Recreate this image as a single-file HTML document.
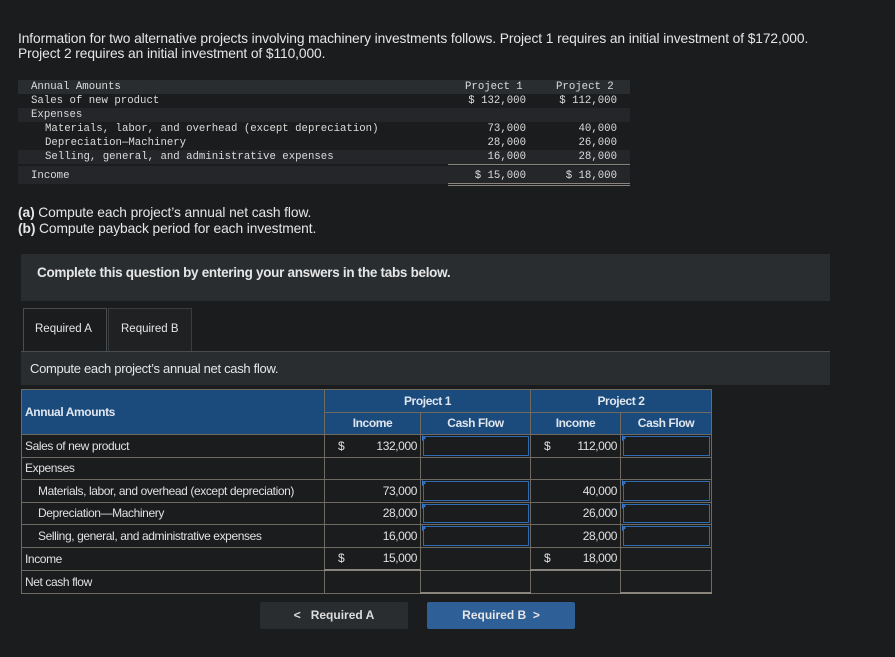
<!DOCTYPE html><html><head><style>
body{margin:0;background:#1b1c1e;width:895px;height:657px;position:relative;overflow:hidden;font-family:"Liberation Sans",sans-serif;color:#e6e6e6}
.a{position:absolute;white-space:nowrap}
.m{font-family:"Liberation Mono",monospace;font-size:10.7px;color:#dcdcdc}
.t{font-size:13.8px;letter-spacing:-0.1px}
table{position:absolute;left:21px;top:389px;border-collapse:collapse;table-layout:fixed;width:690px;font-size:12px;letter-spacing:-0.4px}
td{border:1px solid #6e6a62;padding:0 3px;height:21.5px;color:#e0e0e0;overflow:hidden;white-space:nowrap;line-height:14px}
th{background:#1b4a7d;border:1px solid #6e6a62;font-weight:bold;color:#dfe6ee;height:21.5px;padding:0;line-height:14px;font-size:12px}
.r{text-align:right}
.in{position:relative}
.in div{position:absolute;left:2px;top:1px;right:1px;bottom:1px;border:1px solid #2d6bb3}
.in:before{content:"";position:absolute;left:1px;top:0;border-left:4px solid #3a7ad0;border-top:3px solid transparent;border-bottom:3px solid transparent}
</style></head><body>
<div class="a t" style="left:18px;top:31px">Information for two alternative projects involving machinery investments follows. Project 1 requires an initial investment of $172,000.</div>
<div class="a t" style="left:18px;top:46px">Project 2 requires an initial investment of $110,000.</div>
<div class="a" style="left:18px;top:80px;width:612px;height:14px;background:#2a2d30"></div>
<div class="a" style="left:18px;top:108px;width:612px;height:14px;background:#242629"></div>
<div class="a" style="left:18px;top:150px;width:612px;height:14px;background:#242629"></div>
<div class="a" style="left:18px;top:166px;width:612px;height:18px;background:#242629"></div>
<div class="a m" style="left:31px;top:81px">Annual Amounts</div>
<div class="a m" style="left:31px;top:95px">Sales of new product</div>
<div class="a m" style="left:31px;top:109px">Expenses</div>
<div class="a m" style="left:45px;top:123px">Materials, labor, and overhead (except depreciation)</div>
<div class="a m" style="left:45px;top:137px">Depreciation—Machinery</div>
<div class="a m" style="left:45px;top:151px">Selling, general, and administrative expenses</div>
<div class="a m" style="left:31px;top:170px">Income</div>
<div class="a m" style="left:465px;top:81px">Project 1</div>
<div class="a m" style="left:556px;top:81px">Project 2</div>
<div class="a m" style="right:369px;top:95px">$ 132,000</div>
<div class="a m" style="right:278px;top:95px">$ 112,000</div>
<div class="a m" style="right:369px;top:123px">73,000</div><div class="a m" style="right:278px;top:123px">40,000</div>
<div class="a m" style="right:369px;top:137px">28,000</div><div class="a m" style="right:278px;top:137px">26,000</div>
<div class="a m" style="right:369px;top:151px">16,000</div><div class="a m" style="right:278px;top:151px">28,000</div>
<div class="a" style="left:448px;top:164px;width:182px;height:1px;background:#8a857c"></div>
<div class="a m" style="right:369px;top:170px">$ 15,000</div><div class="a m" style="right:278px;top:170px">$ 18,000</div>
<div class="a" style="left:448px;top:183px;width:182px;height:3px;border-top:1px solid #8a857c;border-bottom:1px solid #8a857c;box-sizing:border-box"></div>
<div class="a t" style="left:18px;top:205px"><b>(a)</b> Compute each project’s annual net cash flow.</div>
<div class="a t" style="left:18px;top:221px"><b>(b)</b> Compute payback period for each investment.</div>
<div class="a" style="left:21px;top:254px;width:809px;height:47px;background:#2a2d30"></div>
<div class="a" style="left:37px;top:265px;font-size:13.5px;font-weight:bold;letter-spacing:-0.3px">Complete this question by entering your answers in the tabs below.</div>
<div class="a" style="left:23px;top:308px;width:82px;height:44px;border:1px solid #4a4d50;border-bottom:none;background:#1b1c1e"></div>
<div class="a" style="left:108px;top:308px;width:82px;height:43px;border:1px solid #3a3d40;background:#1f2123"></div>
<div class="a" style="left:35px;top:323px;font-size:11.5px">Required A</div>
<div class="a" style="left:121px;top:323px;font-size:11.5px">Required B</div>
<div class="a" style="left:21px;top:351px;width:809px;height:33px;background:#2a2d30;border-top:1px solid #4a4d50"></div>
<div class="a" style="left:30px;top:361px;font-size:13px;letter-spacing:-0.3px">Compute each project’s annual net cash flow.</div>
<table>
<colgroup><col style="width:303px"><col style="width:96px"><col style="width:110px"><col style="width:90px"><col style="width:91px"></colgroup>
<tr><th rowspan="2" style="text-align:left;padding-left:3px">Annual Amounts</th><th colspan="2">Project 1</th><th colspan="2">Project 2</th></tr>
<tr><th>Income</th><th>Cash Flow</th><th>Income</th><th>Cash Flow</th></tr>
<tr><td>Sales of new product</td><td class="r"><span style="float:left;margin-left:10px">$</span>132,000</td><td class="in"><div></div></td><td class="r"><span style="float:left;margin-left:10px">$</span>112,000</td><td class="in"><div></div></td></tr>
<tr><td>Expenses</td><td></td><td></td><td></td><td></td></tr>
<tr><td style="padding-left:16px">Materials, labor, and overhead (except depreciation)</td><td class="r">73,000</td><td class="in"><div></div></td><td class="r">40,000</td><td class="in"><div></div></td></tr>
<tr><td style="padding-left:16px">Depreciation—Machinery</td><td class="r">28,000</td><td class="in"><div></div></td><td class="r">26,000</td><td class="in"><div></div></td></tr>
<tr><td style="padding-left:16px">Selling, general, and administrative expenses</td><td class="r">16,000</td><td class="in"><div></div></td><td class="r">28,000</td><td class="in"><div></div></td></tr>
<tr><td>Income</td><td class="r" style="border-bottom:2px solid #8a857c"><span style="float:left;margin-left:10px">$</span>15,000</td><td></td><td class="r" style="border-bottom:2px solid #8a857c"><span style="float:left;margin-left:10px">$</span>18,000</td><td></td></tr>
<tr><td>Net cash flow</td><td></td><td style="border-bottom:2px solid #8a857c"></td><td></td><td style="border-bottom:2px solid #8a857c"></td></tr>
</table>
<div class="a" style="left:260px;top:602px;width:148px;height:27px;background:#2a2d30;border-radius:2px;font-size:12px;font-weight:bold;line-height:27px;text-align:center;color:#ddd">&lt;&nbsp;&nbsp; Required A</div>
<div class="a" style="left:427px;top:602px;width:148px;height:27px;background:#2e5f96;border-radius:2px;font-size:12px;font-weight:bold;line-height:27px;text-align:center;color:#e6e6e6">Required B &nbsp;&gt;</div>
</body></html>
